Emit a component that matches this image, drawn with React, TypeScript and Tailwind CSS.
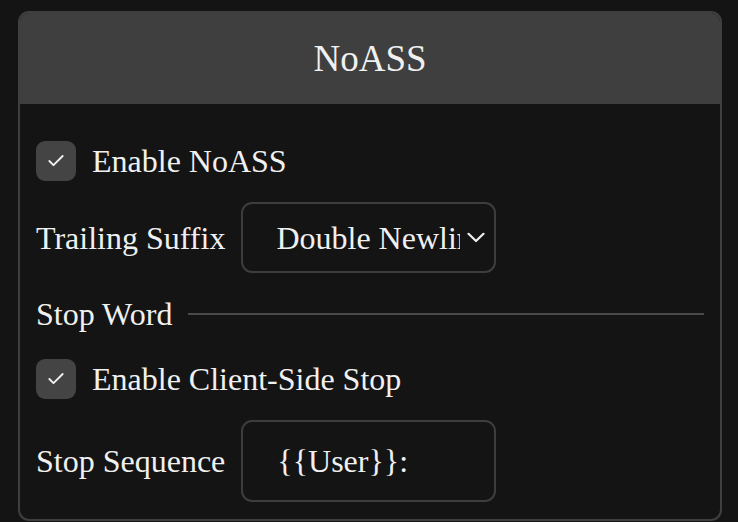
import { Check } from "lucide-react";

const serif = { fontFamily: '"Liberation Serif", "Times New Roman", serif' };

function CheckRow({ label, className = "" }: { label: string; className?: string }) {
  return (
    <label className={`flex h-10 items-center gap-4 ${className}`}>
      <span className="flex h-10 w-10 items-center justify-center rounded-[9px] bg-[#444444]">
        <Check className="h-5 w-5 text-[#f2f2f2]" strokeWidth={2.2} />
      </span>
      <span>{label}</span>
    </label>
  );
}

export default function App() {
  return (
    <div
      className="min-h-[522px] bg-[#141414] px-[18px] pt-[11px] text-[32px] leading-[36px] text-[#f0f0f0]"
      style={serif}
    >
      <div className="w-[704px] overflow-hidden rounded-[11px] border-2 border-[#3f3f3f]">
        <div className="flex h-[91px] items-center justify-center bg-[#3f3f3f] text-[37px]">
          NoASS
        </div>

        <div className="flex flex-col px-4 pb-[17px] pt-[37px]">
          <CheckRow label="Enable NoASS" />

          <div className="mt-[21px] flex items-center gap-4">
            <span>Trailing Suffix</span>
            <div className="flex h-[71px] w-[255px] items-center rounded-[11px] border-2 border-[#3d3d3d] pl-[33px] pr-[9px]">
              <span className="w-[184px] overflow-hidden whitespace-nowrap">Double Newline</span>
              {/* chevron */}
              <svg className="ml-auto" width="18" height="11" viewBox="0 0 18 11" fill="none">
                <path d="M1.5 1.8 L9 9 L16.5 1.8" stroke="#f0f0f0" strokeWidth="2.2" strokeLinecap="round" strokeLinejoin="round" />
              </svg>
            </div>
          </div>

          <div className="mt-[23px] flex h-[36px] items-center gap-4">
            <span>Stop Word</span>
            <div className="h-[2px] flex-1 bg-[#4a4a4a]" />
          </div>

          <CheckRow label="Enable Client-Side Stop" className="mt-[27px]" />

          <div className="mt-[21px] flex items-center gap-4">
            <span>Stop Sequence</span>
            <div className="flex h-[82px] w-[255px] items-center rounded-[11px] border-2 border-[#3d3d3d] pl-[34px]">
              {"{{User}}:"}
            </div>
          </div>
        </div>
      </div>
    </div>
  );
}
